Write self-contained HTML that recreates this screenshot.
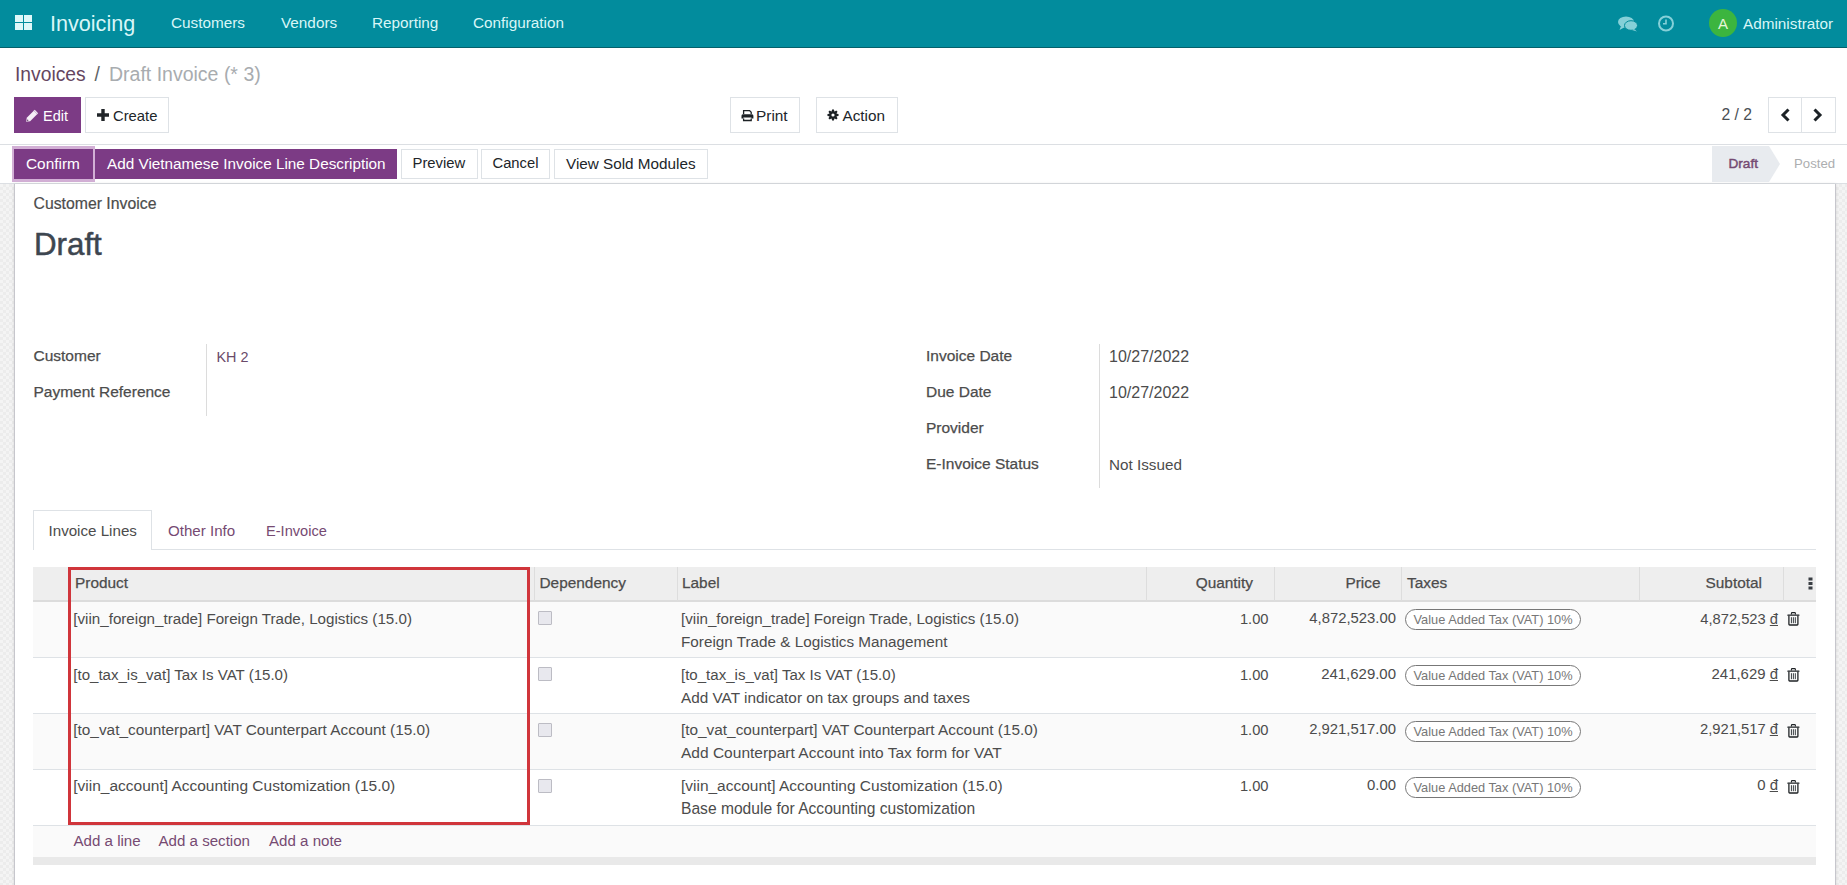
<!DOCTYPE html>
<html><head><meta charset="utf-8">
<style>
*{box-sizing:border-box;margin:0;padding:0}
html,body{width:1847px;height:885px;overflow:hidden;background:#fff;font-family:"Liberation Sans",sans-serif;color:#4c4c4c}
.a{position:absolute;white-space:nowrap;line-height:1}
svg{position:absolute;display:block}
/* navbar */
#nav{position:absolute;left:0;top:0;width:1847px;height:48px;background:#028c9d;border-bottom:1px solid #05606b}
.nt{color:#d9f6f7;font-size:15.3px}
/* control panel */
.btn{position:absolute;border:1px solid #dee2e6;background:#fff;}
.pbtn{position:absolute;background:#7c3b85}
.bt{color:#212529;font-size:15px}
.hl{position:absolute;left:0;width:1847px;height:1px;background:#dcdfe3}
/* sheet */
#bg{position:absolute;left:0;top:184px;width:1847px;height:701px;background:repeating-conic-gradient(#ececec 0 25%,#f4f4f4 0 50%) 0 0/6px 6px}
#sheet{position:absolute;left:14px;top:184px;width:1822px;height:701px;background:#fff;border-left:1px solid #c6c6cc;border-right:1px solid #c6c6cc;box-shadow:0 0 3px rgba(0,0,0,0.12)}
.lbl{font-size:15.5px;color:#4c4c4c;-webkit-text-stroke:0.25px #4c4c4c}
.val{font-size:15.3px;color:#4c4c4c}
.vl{position:absolute;width:1px;background:#dcdcdc}
.th{font-size:15.4px;color:#4c4c4c;-webkit-text-stroke:0.25px #4c4c4c}
.td{font-size:15.1px;color:#4c4c4c}
.row{position:absolute;left:33px;width:1783px;border-bottom:1px solid #dee2e6}
.cb{position:absolute;width:14px;height:14px;border:1px solid #bcbcc4;background:#e8e8ee;border-radius:1px}
.badge{position:absolute;height:21px;border:1px solid #777;border-radius:11px;background:#fff}
.bdt{font-size:12.8px;color:#777}
.lnk{color:#764a72;font-size:15.1px}
</style></head><body>

<div id="nav"></div>
<!-- apps icon -->
<svg style="left:14px;top:15px" width="19" height="16" viewBox="0 0 19 16"><g fill="#dff8f9"><rect x="1" y="0" width="8" height="7"/><rect x="10" y="0" width="8" height="7"/><rect x="1" y="8" width="8" height="7"/><rect x="10" y="8" width="8" height="7"/></g></svg>
<div class="a" style="left:50px;top:12.5px;font-size:21.6px;color:#d9f6f7">Invoicing</div>
<div class="a nt" style="left:171px;top:15px">Customers</div>
<div class="a nt" style="left:281px;top:15px">Vendors</div>
<div class="a nt" style="left:372px;top:15px">Reporting</div>
<div class="a nt" style="left:473px;top:15px">Configuration</div>
<!-- chat icon -->
<svg style="left:1618px;top:16px" width="20" height="16" viewBox="0 0 20 16"><g fill="#85d0d8"><ellipse cx="8" cy="6" rx="8" ry="5.6"/><path d="M3 10 L1.5 14 L7 11 Z"/><ellipse cx="13" cy="9.5" rx="6.5" ry="4.8" fill="#85d0d8" stroke="#028a99" stroke-width="1"/><path d="M16 13 L19 15.5 L14 14 Z"/></g></svg>
<!-- clock icon -->
<svg style="left:1657px;top:15px" width="18" height="17" viewBox="0 0 18 17"><circle cx="9" cy="8.5" r="7" fill="none" stroke="#85d0d8" stroke-width="2"/><path d="M9 4.5 V8.8 H6" fill="none" stroke="#85d0d8" stroke-width="1.6"/></svg>
<div style="position:absolute;left:1709px;top:9px;width:28px;height:28px;border-radius:50%;background:#3cb53f"></div>
<div class="a" style="left:1718px;top:15.5px;font-size:15px;color:#e6f7d8">A</div>
<div class="a nt" style="left:1743px;top:16px">Administrator</div>

<!-- breadcrumb -->
<div class="a" style="left:15px;top:65px;font-size:19.3px;color:#65465f">Invoices</div>
<div class="a" style="left:94.5px;top:65px;font-size:19.3px;color:#606366">/</div>
<div class="a" style="left:109px;top:65px;font-size:19.5px;color:#a8acaf">Draft Invoice (* 3)</div>

<!-- edit / create -->
<div class="pbtn" style="left:14px;top:97px;width:67px;height:36px"></div>
<svg style="left:25px;top:109px" width="15" height="14" viewBox="0 0 15 14"><path d="M1.2 12.8 L5.16 12.24 L13.15 4.25 L9.75 0.85 L1.76 8.84 Z" fill="#f6eef7"/><path d="M8.9 1.7 L12.3 5.1" stroke="#b89bbd" stroke-width="0.7"/><circle cx="2.6" cy="11.4" r="0.8" fill="#7c5a80"/></svg>
<div class="a" style="left:43px;top:108.5px;font-size:14.5px;color:#fff">Edit</div>
<div class="btn" style="left:85px;top:97px;width:84px;height:36px"></div>
<svg style="left:97px;top:109px" width="12" height="12" viewBox="0 0 12 12"><path d="M4.3 0 H7.7 V4.3 H12 V7.7 H7.7 V12 H4.3 V7.7 H0 V4.3 H4.3 Z" fill="#212529"/></svg>
<div class="a bt" style="left:113px;top:108.5px;font-size:14.8px">Create</div>

<!-- print / action -->
<div class="btn" style="left:730px;top:97px;width:70px;height:36px"></div>
<svg style="left:741px;top:109px" width="13" height="13" viewBox="0 0 13 13"><g fill="none" stroke="#1c2125" stroke-width="1.3"><path d="M2.6 5 V1.6 H8.6 L10.2 3.2 V5"/><path d="M2.6 9.4 V11.5 H10.2 V9.4"/></g><path d="M1.8 5.3 H11 Q12.4 5.3 12.4 6.8 V9.6 H10.4 V8.6 H2.4 V9.6 H0.5 V6.8 Q0.5 5.3 1.8 5.3 Z" fill="#1c2125"/></svg>
<div class="a bt" style="left:756px;top:108px;font-size:15.4px">Print</div>
<div class="btn" style="left:816px;top:97px;width:82px;height:36px"></div>
<svg style="left:826px;top:108px" width="14" height="14" viewBox="0 0 14 14"><path fill="#1c2125" fill-rule="evenodd" d="M10.76 5.65 L12.52 6.08 L12.52 7.92 L10.76 8.35 L10.62 8.71 L11.56 10.26 L10.26 11.56 L8.71 10.62 L8.35 10.76 L7.92 12.52 L6.08 12.52 L5.65 10.76 L5.29 10.62 L3.74 11.56 L2.44 10.26 L3.38 8.71 L3.24 8.35 L1.48 7.92 L1.48 6.08 L3.24 5.65 L3.38 5.29 L2.44 3.74 L3.74 2.44 L5.29 3.38 L5.65 3.24 L6.08 1.48 L7.92 1.48 L8.35 3.24 L8.71 3.38 L10.26 2.44 L11.56 3.74 L10.62 5.29 Z M7 5.4 A1.6 1.6 0 1 0 7 8.6 A1.6 1.6 0 1 0 7 5.4 Z"/></svg>
<div class="a bt" style="left:842.5px;top:108px;font-size:15.3px">Action</div>

<!-- pager -->
<div class="a bt" style="left:1721.5px;top:107px;font-size:15.7px;color:#4a4f54">2 / 2</div>
<div class="btn" style="left:1768px;top:97px;width:68px;height:36px"></div>
<div style="position:absolute;left:1801px;top:97px;width:1px;height:36px;background:#dee2e6"></div>
<svg style="left:1780px;top:108px" width="11" height="14" viewBox="0 0 11 14"><path d="M8.5 1.5 L3 7 L8.5 12.5" fill="none" stroke="#1c2226" stroke-width="3"/></svg>
<svg style="left:1812px;top:108px" width="11" height="14" viewBox="0 0 11 14"><path d="M2.5 1.5 L8 7 L2.5 12.5" fill="none" stroke="#1c2226" stroke-width="3"/></svg>

<div class="hl" style="top:144px"></div>
<!-- status bar buttons -->
<div style="position:absolute;left:12px;top:146px;width:83px;height:36px;background:#d2afd5"></div>
<div class="pbtn" style="left:14px;top:149px;width:79px;height:30px"></div>
<div class="a" style="left:26px;top:156px;font-size:15.4px;color:#fff">Confirm</div>
<div class="pbtn" style="left:95px;top:149px;width:302px;height:30px"></div>
<div class="a" style="left:107px;top:156px;font-size:15.3px;color:#fff">Add Vietnamese Invoice Line Description</div>
<div class="btn" style="left:401px;top:149px;width:77px;height:30px"></div>
<div class="a bt" style="left:412.5px;top:156px;font-size:14.85px">Preview</div>
<div class="btn" style="left:481px;top:149px;width:69px;height:30px"></div>
<div class="a bt" style="left:492.5px;top:156px;font-size:14.75px">Cancel</div>
<div class="btn" style="left:554px;top:149px;width:154px;height:30px"></div>
<div class="a bt" style="left:566px;top:156px;font-size:15.28px">View Sold Modules</div>
<!-- statusbar -->
<svg style="left:1712px;top:146px" width="70" height="36" viewBox="0 0 70 36"><path d="M0 0 H57 L68 18 L57 36 H0 Z" fill="#e8ebef"/></svg>
<div class="a" style="left:1728.5px;top:157px;font-size:13.6px;color:#744a72;-webkit-text-stroke:0.45px #744a72">Draft</div>
<div class="a" style="left:1794px;top:157px;font-size:13.2px;color:#acaeb0">Posted</div>
<div class="hl" style="top:183px"></div>

<!-- sheet -->
<div id="bg"></div>
<div id="sheet"></div>

<div class="a" style="left:33.5px;top:196px;font-size:15.8px;color:#4c4c4c;-webkit-text-stroke:0.2px #4c4c4c">Customer Invoice</div>
<div class="a" style="left:34px;top:228.5px;font-size:31.3px;color:#3d4650;-webkit-text-stroke:0.5px #3d4650">Draft</div>

<div class="a lbl" style="left:33.5px;top:348px">Customer</div>
<div class="a lbl" style="left:33.5px;top:384px;font-size:15.5px">Payment Reference</div>
<div class="vl" style="left:206px;top:344px;height:72px"></div>
<div class="a val" style="left:216.5px;top:350px;font-size:14.4px;color:#6a4a6a">KH 2</div>

<div class="a lbl" style="left:926px;top:348px">Invoice Date</div>
<div class="a lbl" style="left:926px;top:384px">Due Date</div>
<div class="a lbl" style="left:926px;top:420px">Provider</div>
<div class="a lbl" style="left:926px;top:456px">E-Invoice Status</div>
<div class="vl" style="left:1099px;top:344px;height:144px"></div>
<div class="a val" style="left:1109px;top:349px;font-size:16px">10/27/2022</div>
<div class="a val" style="left:1109px;top:385px;font-size:16px">10/27/2022</div>
<div class="a val" style="left:1109px;top:457px;font-size:15.25px">Not Issued</div>

<!-- tabs -->
<div style="position:absolute;left:33px;top:549px;width:1783px;height:1px;background:#dee2e6"></div>
<div style="position:absolute;left:33px;top:510px;width:119px;height:40px;background:#fff;border:1px solid #dee2e6;border-bottom:none"></div>
<div class="a" style="left:48.5px;top:523px;font-size:15.15px;color:#4c4c4c">Invoice Lines</div>
<div class="a lnk" style="left:168px;top:523px">Other Info</div>
<div class="a lnk" style="left:266px;top:524px;font-size:14.6px">E-Invoice</div>

<!-- table -->
<div id="thead" style="position:absolute;left:33px;top:567px;width:1783px;height:35px;background:#eeeeee;border-bottom:2px solid #dcdcdc"></div>
<!-- header texts -->
<div style="position:absolute;left:534px;top:567px;width:1px;height:34px;background:#dddddd"></div>
<div style="position:absolute;left:677px;top:567px;width:1px;height:34px;background:#dddddd"></div>
<div style="position:absolute;left:1146px;top:567px;width:1px;height:34px;background:#dddddd"></div>
<div style="position:absolute;left:1274px;top:567px;width:1px;height:34px;background:#dddddd"></div>
<div style="position:absolute;left:1401px;top:567px;width:1px;height:34px;background:#dddddd"></div>
<div style="position:absolute;left:1639px;top:567px;width:1px;height:34px;background:#dddddd"></div>
<div style="position:absolute;left:1783px;top:567px;width:1px;height:34px;background:#dddddd"></div>
<div class="a th" style="left:75px;top:575px">Product</div>
<div class="a th" style="left:539.5px;top:575px">Dependency</div>
<div class="a th" style="left:682px;top:575px">Label</div>
<div class="a th" style="right:594px;top:575px">Quantity</div>
<div class="a th" style="right:466.5px;top:575px">Price</div>
<div class="a th" style="left:1407px;top:575px">Taxes</div>
<div class="a th" style="right:85px;top:575px">Subtotal</div>
<svg style="left:1808px;top:577px" width="6" height="13" viewBox="0 0 6 13"><g fill="#3a3f44"><rect x="0.5" y="0.5" width="4" height="3"/><rect x="0.5" y="5" width="4" height="3"/><rect x="0.5" y="9.5" width="4" height="3"/></g></svg>
<div class="row" style="top:602px;height:56px;background:#fafafa"></div>
<div class="a td" style="left:73.3px;top:611px;font-size:15.17px">[viin_foreign_trade] Foreign Trade, Logistics (15.0)</div>
<div class="cb" style="left:538px;top:611px"></div>
<div class="a td" style="left:681px;top:611px;font-size:15.13px">[viin_foreign_trade] Foreign Trade, Logistics (15.0)</div>
<div class="a td" style="left:681px;top:634px;font-size:15.28px">Foreign Trade &amp; Logistics Management</div>
<div class="a td" style="right:578.5px;top:612px;font-size:14.7px">1.00</div>
<div class="a td" style="right:451px;top:611px;font-size:14.85px">4,872,523.00</div>
<div class="badge" style="left:1405px;top:609px;width:176px"></div>
<div class="a bdt" style="left:1413.5px;top:614px">Value Added Tax (VAT) 10%</div>
<div class="a td" style="right:69px;top:612px;font-size:14.73px">4,872,523 <span style="text-decoration:underline">đ</span></div>
<svg style="left:1787px;top:612px" width="13" height="15" viewBox="0 0 13 15"><g fill="none" stroke="#1f2326"><path d="M4.4 2.4 V1.4 Q4.4 0.6 5.2 0.6 H7.6 Q8.4 0.6 8.4 1.4 V2.4" stroke-width="1.1"/><path d="M1.9 3.4 V12.2 Q1.9 13 2.7 13 H10.1 Q10.9 13 10.9 12.2 V3.4" stroke-width="1.3"/></g><rect x="0.3" y="2.4" width="12.2" height="1.4" rx="0.5" fill="#1f2326"/><g fill="#4a4f53"><rect x="3.9" y="5.2" width="1.1" height="6"/><rect x="5.85" y="5.2" width="1.1" height="6"/><rect x="7.8" y="5.2" width="1.1" height="6"/></g></svg>
<div class="row" style="top:658px;height:56px;background:#ffffff"></div>
<div class="a td" style="left:73.3px;top:667px;font-size:15.06px">[to_tax_is_vat] Tax Is VAT (15.0)</div>
<div class="cb" style="left:538px;top:667px"></div>
<div class="a td" style="left:681px;top:667px;font-size:15.05px">[to_tax_is_vat] Tax Is VAT (15.0)</div>
<div class="a td" style="left:681px;top:690px;font-size:15.33px">Add VAT indicator on tax groups and taxes</div>
<div class="a td" style="right:578.5px;top:668px;font-size:14.7px">1.00</div>
<div class="a td" style="right:451px;top:667px;font-size:14.96px">241,629.00</div>
<div class="badge" style="left:1405px;top:665px;width:176px"></div>
<div class="a bdt" style="left:1413.5px;top:670px">Value Added Tax (VAT) 10%</div>
<div class="a td" style="right:69px;top:667px;font-size:14.94px">241,629 <span style="text-decoration:underline">đ</span></div>
<svg style="left:1787px;top:668px" width="13" height="15" viewBox="0 0 13 15"><g fill="none" stroke="#1f2326"><path d="M4.4 2.4 V1.4 Q4.4 0.6 5.2 0.6 H7.6 Q8.4 0.6 8.4 1.4 V2.4" stroke-width="1.1"/><path d="M1.9 3.4 V12.2 Q1.9 13 2.7 13 H10.1 Q10.9 13 10.9 12.2 V3.4" stroke-width="1.3"/></g><rect x="0.3" y="2.4" width="12.2" height="1.4" rx="0.5" fill="#1f2326"/><g fill="#4a4f53"><rect x="3.9" y="5.2" width="1.1" height="6"/><rect x="5.85" y="5.2" width="1.1" height="6"/><rect x="7.8" y="5.2" width="1.1" height="6"/></g></svg>
<div class="row" style="top:714px;height:56px;background:#fafafa"></div>
<div class="a td" style="left:73.3px;top:722px;font-size:15.37px">[to_vat_counterpart] VAT Counterpart Account (15.0)</div>
<div class="cb" style="left:538px;top:723px"></div>
<div class="a td" style="left:681px;top:722px;font-size:15.36px">[to_vat_counterpart] VAT Counterpart Account (15.0)</div>
<div class="a td" style="left:681px;top:745px;font-size:15.52px">Add Counterpart Account into Tax form for VAT</div>
<div class="a td" style="right:578.5px;top:723px;font-size:14.7px">1.00</div>
<div class="a td" style="right:451px;top:722px;font-size:14.88px">2,921,517.00</div>
<div class="badge" style="left:1405px;top:721px;width:176px"></div>
<div class="a bdt" style="left:1413.5px;top:726px">Value Added Tax (VAT) 10%</div>
<div class="a td" style="right:69px;top:722px;font-size:14.78px">2,921,517 <span style="text-decoration:underline">đ</span></div>
<svg style="left:1787px;top:724px" width="13" height="15" viewBox="0 0 13 15"><g fill="none" stroke="#1f2326"><path d="M4.4 2.4 V1.4 Q4.4 0.6 5.2 0.6 H7.6 Q8.4 0.6 8.4 1.4 V2.4" stroke-width="1.1"/><path d="M1.9 3.4 V12.2 Q1.9 13 2.7 13 H10.1 Q10.9 13 10.9 12.2 V3.4" stroke-width="1.3"/></g><rect x="0.3" y="2.4" width="12.2" height="1.4" rx="0.5" fill="#1f2326"/><g fill="#4a4f53"><rect x="3.9" y="5.2" width="1.1" height="6"/><rect x="5.85" y="5.2" width="1.1" height="6"/><rect x="7.8" y="5.2" width="1.1" height="6"/></g></svg>
<div class="row" style="top:770px;height:56px;background:#ffffff"></div>
<div class="a td" style="left:73.3px;top:778px;font-size:15.49px">[viin_account] Accounting Customization (15.0)</div>
<div class="cb" style="left:538px;top:779px"></div>
<div class="a td" style="left:681px;top:778px;font-size:15.48px">[viin_account] Accounting Customization (15.0)</div>
<div class="a td" style="left:681px;top:801px;font-size:15.61px">Base module for Accounting customization</div>
<div class="a td" style="right:578.5px;top:779px;font-size:14.7px">1.00</div>
<div class="a td" style="right:451px;top:778px;font-size:14.92px">0.00</div>
<div class="badge" style="left:1405px;top:777px;width:176px"></div>
<div class="a bdt" style="left:1413.5px;top:782px">Value Added Tax (VAT) 10%</div>
<div class="a td" style="right:69px;top:778px;font-size:14.96px">0 <span style="text-decoration:underline">đ</span></div>
<svg style="left:1787px;top:780px" width="13" height="15" viewBox="0 0 13 15"><g fill="none" stroke="#1f2326"><path d="M4.4 2.4 V1.4 Q4.4 0.6 5.2 0.6 H7.6 Q8.4 0.6 8.4 1.4 V2.4" stroke-width="1.1"/><path d="M1.9 3.4 V12.2 Q1.9 13 2.7 13 H10.1 Q10.9 13 10.9 12.2 V3.4" stroke-width="1.3"/></g><rect x="0.3" y="2.4" width="12.2" height="1.4" rx="0.5" fill="#1f2326"/><g fill="#4a4f53"><rect x="3.9" y="5.2" width="1.1" height="6"/><rect x="5.85" y="5.2" width="1.1" height="6"/><rect x="7.8" y="5.2" width="1.1" height="6"/></g></svg>
<div class="row" style="top:826px;height:31px;background:#fafafa;border-bottom:none"></div>
<div class="a lnk" style="left:73.5px;top:833px">Add a line</div>
<div class="a lnk" style="left:158.5px;top:833px">Add a section</div>
<div class="a lnk" style="left:269px;top:833px">Add a note</div>
<div style="position:absolute;left:33px;top:857px;width:1783px;height:8px;background:#e9e9e9"></div>
<!-- red box -->
<div style="position:absolute;left:68px;top:567px;width:462px;height:258px;border:3px solid #d0353b"></div>
</body></html>
